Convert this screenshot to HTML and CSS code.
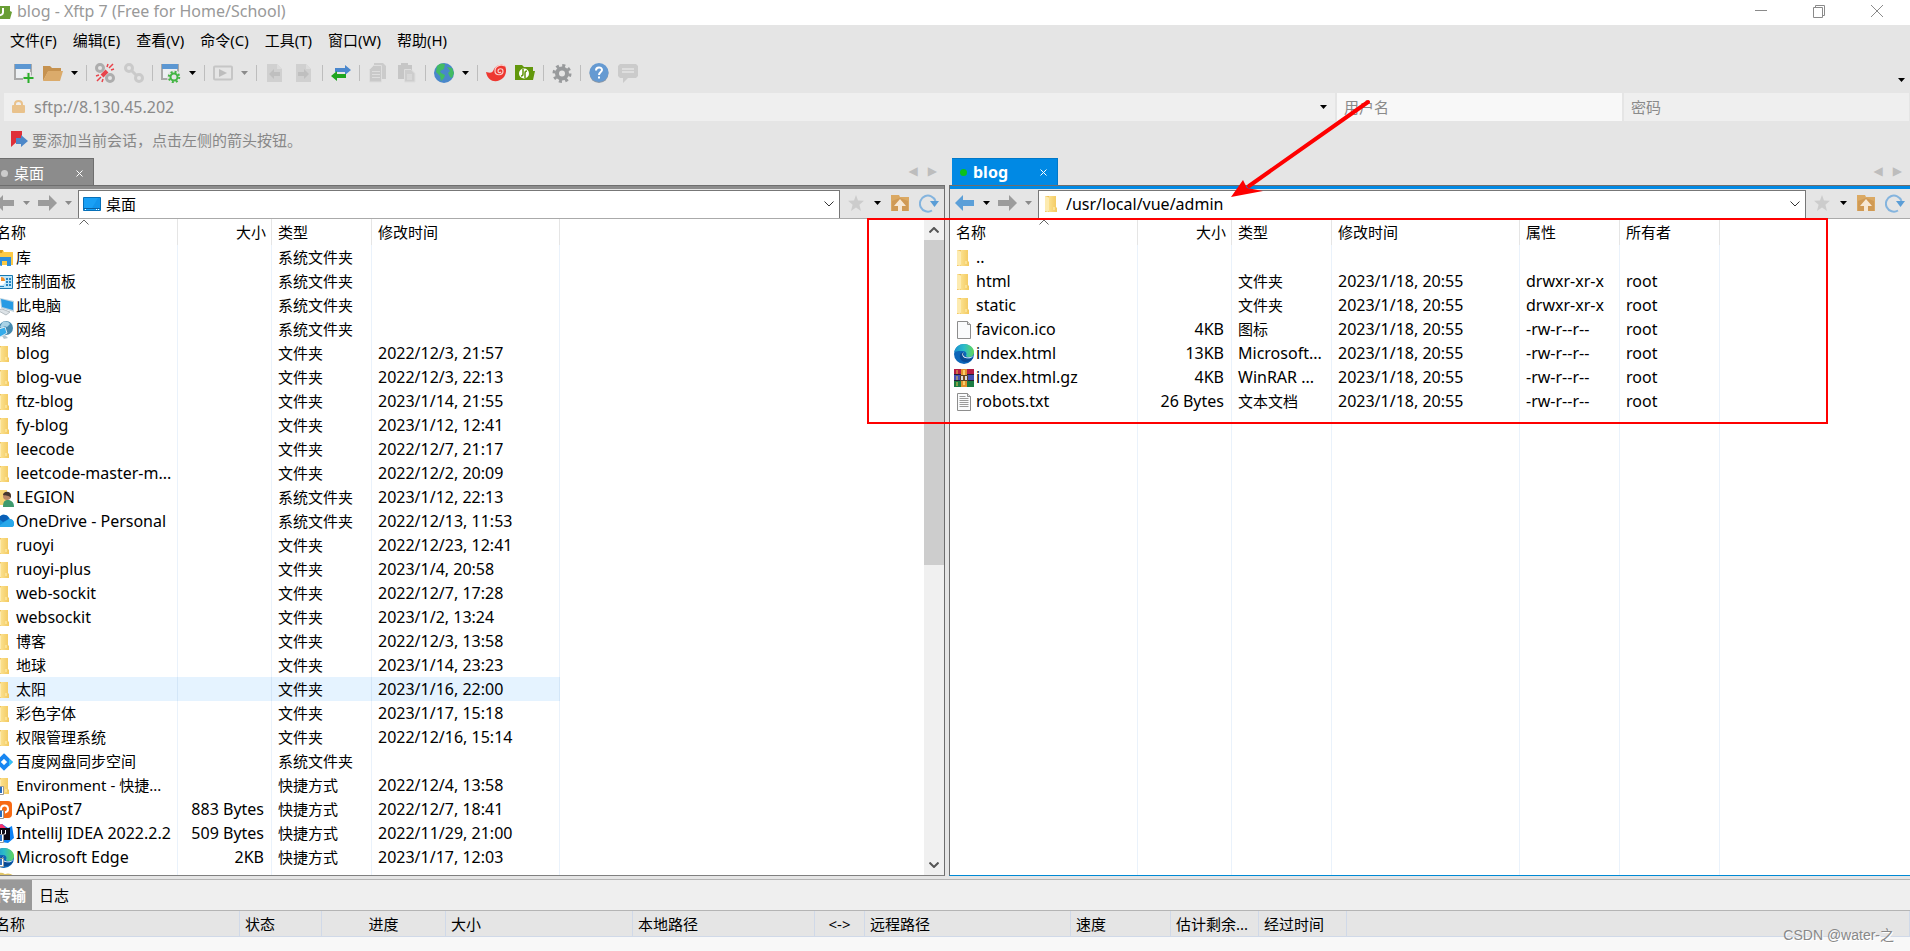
FILE: index.html
```html
<!DOCTYPE html>
<html lang="zh-CN">
<head>
<meta charset="utf-8">
<title>blog - Xftp 7</title>
<link rel="stylesheet" href="styles.css">
</head>
<body>
<svg class="defs" aria-hidden="true">
  <defs>
    <linearGradient id="g-folder" x1="0" x2="1"><stop offset="0" stop-color="#fbe08c"/><stop offset="1" stop-color="#f3c95f"/></linearGradient>
    <linearGradient id="g-edge" x1="0" x2="1"><stop offset="0" stop-color="#1b8fd0"/><stop offset=".5" stop-color="#2bbcc9"/><stop offset="1" stop-color="#62d65a"/></linearGradient>
    <symbol id="caret" viewBox="0 0 7 4"><path d="M0 0h7L3.500 4z" fill="currentColor"/></symbol>
    <symbol id="chevron" viewBox="0 0 10 6"><path d="M.5.5 5 5 9.500.5" fill="none" stroke="currentColor"/></symbol>
    <symbol id="folder" viewBox="0 0 20 20"><path d="M3 2h8v16H3z" fill="#f0c35c"/><path d="M7 2h7v11l1 1v4H7z" fill="url(#g-folder)"/><path d="M3 2l4 1.500v13L6 18 3 17z" fill="#fdebb0"/><path d="M12 13v3" stroke="#fff0b8"/></symbol>
    <symbol id="file" viewBox="0 0 20 20"><path d="M3.500 1.500h10l3 3v14h-13z" fill="#fafbfc" stroke="#8d8d8d"/><path d="M13.500 1.500v3h3" fill="#ddd" stroke="#8d8d8d"/></symbol>
    <symbol id="text" viewBox="0 0 20 20"><path d="M3.500 1.500h10l3 3v14h-13z" fill="#fafbfc" stroke="#8d8d8d"/><path d="M5.500 4.500h6M5.500 6.500h9M5.500 8.500h9M5.500 10.500h9M5.500 12.500h9M5.500 14.500h9" stroke="#9a9a9a"/><path d="M13.500 1.500v3h3" fill="#ddd" stroke="#8d8d8d"/></symbol>
    <symbol id="edge" viewBox="0 0 20 20"><circle cx="10" cy="10" r="10" fill="#0d66b8"/><path d="M0 9C1 3 5 0 10 0c6 0 10 4 10 8 0 3-2 5-5 5-2 0-3-.5-3-1.500 1-1 .6-4.500-3-4.500C5 7 1 7 0 9z" fill="url(#g-edge)"/><path d="M7 9c-2 2-2 8 4 9 3 .4 6-1 8-4-5 2-10 0-9-4 .3-1.500-2-2-3-1z" fill="#0b4a94"/><path d="M10 8c-2 2-1 5 3 5.500 2 .2 4-.3 6-1.500-1 1.500-3 2.500-6 2.300C8 14 7 9.500 10 8z" fill="#fff"/></symbol>
    <symbol id="rar" viewBox="0 0 20 20"><path d="M0 1h20v6H0z" fill="#b51e45"/><path d="M0 7h20v6H0z" fill="#4650b4"/><path d="M0 13h20v6H0z" fill="#1c7c42"/><path d="M0 6.500h20M0 12.500h20" stroke="#24203a"/><path d="M7 1h6v18H7z" fill="#e3922c"/><path d="M9 2h2v15H9z" fill="#f9cf6b"/><path d="M6.500 7.500h7v5h-7z" fill="#ddd" stroke="#594226"/><path d="M9 8h2v4H9z" fill="#7b5021"/><path d="M3 2v4M3 8v4M3 14v4" stroke="#e9c54a"/></symbol>
    <symbol id="library" viewBox="0 0 20 20"><path d="M2 2h7l1 2h9v13H2z" fill="#fdca45"/><path d="M2 2h7l-1 3H2z" fill="#d89a1c"/><path d="M4 17V9h13v9h-4v-5H8v5z" fill="#2d8edc"/></symbol>
    <symbol id="panel" viewBox="0 0 20 20"><path d="M.5 3.500h18v13H.5z" fill="#bde6fa" stroke="#1979b0"/><circle cx="7" cy="9" r="4" fill="#fff"/><path d="M7 9V5a4 4 0 0 1 4 4z" fill="#f08f2b"/><path d="M12 6h2v2h-2zM15 6h2v2h-2zM12 9h2v2h-2zM15 9h2v2h-2zM12 12h2v2h-2zM15 12h2v2h-2z" fill="#2685c2"/><path d="M3 14.500h7" stroke="#2685c2"/></symbol>
    <symbol id="computer" viewBox="0 0 20 20"><path d="M6 2l14 3v11L7 12z" fill="#bcd2df"/><path d="M7 3l12 3v8L8 11z" fill="#279be4"/><path d="M3 14l5-1 8 3-4 3z" fill="#dde3e7" stroke="#b5bdc2"/></symbol>
    <symbol id="network" viewBox="0 0 20 20"><circle cx="12" cy="8" r="7" fill="#4689ae"/><path d="M8 3c2-2 6-2 8 1l-3 3-3-1-1 3-3-2z" fill="#a9d2e6"/><path d="M2 10l9-3 2 6-7 4z" fill="#35aceb" stroke="#d7e8f1"/><path d="M8 16l3-1 3 3-4 1z" fill="#b4c5cf"/></symbol>
    <symbol id="user" viewBox="0 0 20 20"><path d="M2 2h11v15H2z" fill="#f7d575"/><path d="M9 19c0-6 2-7 5-7s6 2 6 7z" fill="#3e9a6d"/><circle cx="13" cy="8" r="4" fill="#b98768"/><path d="M9 7c0-4 8-5 8 1v2c-2-3-5-2-8-3z" fill="#453630"/></symbol>
    <symbol id="onedrive" viewBox="0 0 20 20"><path d="M1 12C0 7 5 7 5 6c2-5 9-4 11 1 3 0 4 3 4 5s-1 3-3 3H3z" fill="#1490df"/><path d="M5 6c2-5 9-4 10 1l-6 3-4-3z" fill="#0a5fb6"/><path d="M3 15l12-8c4 0 5 3 5 5s-1 3-3 3z" fill="#28a8ea"/></symbol>
    <symbol id="baidu" viewBox="0 0 20 20"><path d="M10 4l6 6-6 6-6-6z" fill="none" stroke="#1887f2" stroke-width="4"/><path d="M15 7l4 3-4 4z" fill="#35c2f4"/></symbol>
    <symbol id="link" viewBox="0 0 20 20"><path d="M.5 10.500h9v8h-9z" fill="#fff" stroke="#999"/><path d="M7 17v-5H5M7 12l-4 4" fill="none" stroke="#286fc3" stroke-width="2"/></symbol>
    <symbol id="apipost" viewBox="0 0 20 20"><rect x="0" y="1" width="18" height="17" rx="4" fill="#f76a14"/><path d="M7 14v-5a3.500 3.500 0 1 1 4 3.500" fill="none" stroke="#fff" stroke-width="2"/></symbol>
    <symbol id="idea" viewBox="0 0 20 20"><path d="M0 2l8-2 6 4 4-2 2 12-6 5-14-2z" fill="#0d82f5"/><path d="M0 2l8-2 5 5-9 8z" fill="#fb316b"/><path d="M3 4h13v12H3z" fill="#0c0914"/><path d="M7.500 6v4M11.500 6v4H10" stroke="#fff" fill="none"/></symbol>
    <symbol id="desktop" viewBox="0 0 20 20"><path d="M1.500 3.500h17v13h-17z" fill="#19a0f5" stroke="#0770b8"/><path d="M2 14.500h16" stroke="#0a61a2"/><path d="M3 15.500h1M14 15.500h1M16 15.500h1" stroke="#fff"/><path d="M10 14l6-10h2v10z" fill="#1295ec"/></symbol>
    <symbol id="back" viewBox="0 0 20 16"><path d="M0 8l8-8v5h11v6H8v5z" fill="currentColor"/></symbol>
    <symbol id="forward" viewBox="0 0 20 16"><path d="M20 8l-8-8v5H1v6h11v5z" fill="currentColor"/></symbol>
    <symbol id="star" viewBox="0 0 16 16"><path d="M8 0l2 5.500 6 .3-4.600 3.900L13 16l-5-3.500L3 16l1.600-6.300L0 5.800l6-.3z" fill="#ccc"/></symbol>
    <symbol id="up" viewBox="0 0 18 18"><path d="M0 1h8l1 2h9v14H0z" fill="#dba963"/><path d="M1 17V7l8-3 8 3v10z" fill="#d09a55"/><path d="M9 5l6 7h-4v5H7v-5H3z" fill="#f7e8d4"/></symbol>
    <symbol id="refresh" viewBox="0 0 20 20"><path d="M13 17.500A8 8 0 1 1 16.500 8" fill="none" stroke="#84b4de" stroke-width="2"/><path d="M11 8h9l-4.500 6z" fill="#5a9dd6"/></symbol>
    <symbol id="chain" viewBox="0 0 20 20"><g fill="none" stroke="currentColor" stroke-width="3"><circle cx="5" cy="5" r="3.500"/><circle cx="15" cy="15" r="3.500"/><path d="M7 7l6 6"/></g></symbol>
    <symbol id="window" viewBox="0 0 20 20"><path d="M1 2h16v14H1z" fill="#edf0f3" stroke="#a9a9a9" stroke-width="2"/><path d="M1 1h16v5H1z" fill="#5c97d2"/></symbol>
  </defs>
</svg>

<div class="window">
  <header class="titlebar">
    <svg class="app-icon" viewBox="0 0 22 18"><path d="M0 2h8l2 2h10v5l2 1-2 7H0z" fill="#699e35"/><path d="M13 6v4a3 3 0 0 1-4 3" fill="none" stroke="#fff" stroke-width="2"/></svg>
    <h1 class="title">blog - Xftp 7 (Free for Home/School)</h1>
    <div class="window-controls">
      <button aria-label="最小化"><svg viewBox="0 0 14 14"><path d="M1 6.500h12"/></svg></button>
      <button aria-label="还原"><svg viewBox="0 0 14 14"><path d="M1.500 3.500h9v10h-9zM3.500 3.500v-2h9v10h-2"/></svg></button>
      <button aria-label="关闭"><svg viewBox="0 0 14 14"><path d="M1 1l12 12M13 1L1 13"/></svg></button>
    </div>
  </header>

  <nav class="menubar">
    <button>文件(F)</button><button>编辑(E)</button><button>查看(V)</button><button>命令(C)</button><button>工具(T)</button><button>窗口(W)</button><button>帮助(H)</button>
  </nav>

  <div class="toolbar">
    <button aria-label="新建会话"><svg viewBox="0 0 20 20"><use href="#window"/><path d="M9 15h11M14.500 9v11" stroke="#e5e5e5" stroke-width="5"/><path d="M9.500 15h10M14.500 10v10" stroke="#2bae2b" stroke-width="2"/></svg></button>
    <button aria-label="打开"><svg viewBox="0 0 20 20"><path d="M0 3h7l2 2h9v4H5L0 18z" fill="#c6924f"/><path d="M5 8h15l-3 10H0z" fill="#dbab6b"/></svg></button>
    <button class="drop" aria-label="打开选项"><svg><use href="#caret"/></svg></button>
    <span class="sep"></span>
    <button aria-label="断开"><svg class="c-mid" viewBox="0 0 20 20"><use href="#chain"/><path d="M7 13l6-6" stroke="#e5e5e5" stroke-width="5"/><path d="M7 13l5-5" stroke="#e8444b" stroke-width="4"/><path d="M14 5l4-4M6 14l-4 4M12 4l1-3M16 7l3-1M4 12l-3 1M8 16l-1 3" stroke="#e8444b" stroke-width="1.500"/></svg></button>
    <button aria-label="重新连接"><svg class="c-light" viewBox="0 0 20 20"><use href="#chain"/></svg></button>
    <span class="sep"></span>
    <button aria-label="属性"><svg viewBox="0 0 20 20"><use href="#window"/><circle cx="13" cy="14" r="7" fill="#e5e5e5"/><circle cx="13" cy="14" r="3.500" fill="none" stroke="#43b543" stroke-width="2"/><circle cx="13" cy="14" r="5.200" fill="none" stroke="#43b543" stroke-width="2" stroke-dasharray="2 2.080"/></svg></button>
    <button class="drop" aria-label="属性选项"><svg><use href="#caret"/></svg></button>
    <span class="sep"></span>
    <button aria-label="执行"><svg viewBox="0 0 20 20"><rect x="1" y="3.500" width="18" height="13" rx="1" fill="none" stroke="#c6c6c6" stroke-width="2"/><path d="M6 6l8 4-8 4z" fill="#bdbdbd"/></svg></button>
    <button class="drop muted" aria-label="执行选项"><svg><use href="#caret"/></svg></button>
    <span class="sep"></span>
    <button aria-label="下载"><svg viewBox="0 0 20 20"><path d="M2 1h10l5 5v13H2z" fill="#d0d0d0"/><path d="M12 1v5h5z" fill="#dcdcdc"/><path d="M4 11l5-5v3h6v4H9v3z" fill="#bfbfbf"/></svg></button>
    <button aria-label="上传"><svg viewBox="0 0 20 20"><path d="M2 1h10l5 5v13H2z" fill="#d0d0d0"/><path d="M12 1v5h5z" fill="#dcdcdc"/><path d="M15 11l-5-5v3H4v4h6v3z" fill="#bfbfbf"/></svg></button>
    <span class="sep"></span>
    <button aria-label="同步"><svg viewBox="0 0 20 20"><path d="M20 7l-6-5v3H4v4h10v3z" fill="#4a87cd"/><path d="M0 13l6-5v3h9v4H6v3z" fill="#1fa51f"/></svg></button>
    <span class="sep"></span>
    <button aria-label="复制"><svg viewBox="0 0 20 20"><path d="M6 0h9l3 3v13H6z" fill="#cbcbcb"/><path d="M1.500 6.500l4-4h8V19h-12z" fill="#c9c9c9" stroke="#dedede"/><path d="M4 8.500h8M4 11.500h8M4 14.500h8" stroke="#dedede"/></svg></button>
    <button aria-label="粘贴"><svg viewBox="0 0 20 20"><path d="M1 2h3V0h7v2h4v14H1z" fill="#c6c6c6"/><path d="M7.500 6.500H14l4 4V19H7.500z" fill="#cdcdcd" stroke="#dedede"/><path d="M10 12h5M10 14h5M10 16h5" stroke="#e2e2e2"/></svg></button>
    <span class="sep"></span>
    <button aria-label="语言"><svg viewBox="0 0 20 20"><circle cx="10" cy="10" r="10" fill="#4987ca"/><path d="M3 3c3-3 5-3 8-2l-1 5-4 2 1 2 4 2-1 3-3 3-1-5-4-4zM13 4l5 1 2 5-2 5-2-1-2-4 2-2z" fill="#42bb63"/></svg></button>
    <button class="drop" aria-label="语言选项"><svg><use href="#caret"/></svg></button>
    <span class="sep"></span>
    <button aria-label="Xshell"><svg viewBox="0 0 20 20"><path d="M0 9c4 1 6 1 7-1 2-5 6-7 10-6l2 1c2 4 1 9-2 12C12 20 2 20 0 9z" fill="#ee3730"/><path d="M19 3c-5-2-10 0-10 5 0 5 8 5 8 0 0-3-5-3-5 0 0 2 2 2 3 1" fill="none" stroke="#f9cfcc" stroke-width="1.200"/></svg></button>
    <button aria-label="Xftp"><svg viewBox="0 0 20 20"><path d="M0 2h7l2 2h9v4h2l-2 9H0z" fill="#62970c"/><circle cx="9" cy="10.500" r="5" fill="#fff"/><path d="M8 6v5c0 2-1 2-2 2M10 15v-5c0-2 1-2 2-2" fill="none" stroke="#62970c" stroke-width="1.500"/></svg></button>
    <span class="sep"></span>
    <button aria-label="选项"><svg viewBox="0 0 20 20"><circle cx="10" cy="10.500" r="5" fill="none" stroke="#989a9c" stroke-width="4"/><circle cx="10" cy="10.500" r="8" fill="none" stroke="#989a9c" stroke-width="3" stroke-dasharray="3 3.283"/></svg></button>
    <span class="sep"></span>
    <button aria-label="帮助"><svg viewBox="0 0 20 20"><circle cx="10" cy="10.500" r="9.500" fill="#8c98a6"/><circle cx="10" cy="9.500" r="9.500" fill="#659ad2"/><path d="M7 7.500c0-4 6-4 6-.5 0 2-3 2-3 5M10 13.500v2" fill="none" stroke="#fff" stroke-width="2"/></svg></button>
    <button aria-label="反馈"><svg viewBox="0 0 20 20"><path d="M2 1h16l2 2v10l-2 2h-8l-5 5v-5H2l-2-2V3z" fill="#cbcbcb"/><path d="M4 6h12M4 9h12" stroke="#dedede" stroke-width="2"/></svg></button>
    <button class="drop overflow" aria-label="更多按钮"><svg><use href="#caret"/></svg></button>
  </div>

  <form class="address">
    <div class="field host">
      <svg class="lock" viewBox="0 0 13 14"><path d="M3 6V4c0-4 7-4 7 0v2" fill="none" stroke="#e9c28c" stroke-width="2"/><rect y="5" width="13" height="8" rx="1" fill="#e9c28c"/></svg>
      <input aria-label="主机" value="sftp://8.130.45.202">
      <button class="drop" type="button" aria-label="历史记录"><svg><use href="#caret"/></svg></button>
    </div>
    <input class="field username" aria-label="用户名" placeholder="用户名">
    <input class="field password" aria-label="密码" type="password" placeholder="密码">
  </form>

  <p class="hint"><svg viewBox="0 0 17 17"><path d="M0 0h11v6L0 16z" fill="#df3039"/><path d="M5 7h5V4l7 6-7 6v-3H5z" fill="#4d88c9"/></svg>要添加当前会话，点击左侧的箭头按钮。</p>

  <main class="workspace">
    <section class="pane local">
      <div class="tabs">
        <button class="tab"><i class="dot"></i><span>桌面</span><svg class="close" viewBox="0 0 7 7"><path d="M.5.5l6 6M6.500.5l-6 6"/></svg></button>
        <div class="tab-scroll"><button aria-label="上一个">◀</button><button aria-label="下一个">▶</button></div>
      </div>
      <div class="nav">
        <div class="history">
          <button aria-label="后退"><svg class="arrow"><use href="#back"/></svg></button><button class="drop muted" aria-label="后退列表"><svg><use href="#caret"/></svg></button>
          <button aria-label="前进"><svg class="arrow"><use href="#forward"/></svg></button><button class="drop muted" aria-label="前进列表"><svg><use href="#caret"/></svg></button>
        </div>
        <div class="path"><svg class="icon"><use href="#desktop"/></svg><input class="cjk" aria-label="本地路径" value="桌面"><button aria-label="展开"><svg class="chev"><use href="#chevron"/></svg></button></div>
        <div class="tools">
          <button aria-label="收藏"><svg class="star"><use href="#star"/></svg></button><button class="drop" aria-label="收藏列表"><svg><use href="#caret"/></svg></button>
          <button aria-label="上级"><svg class="up"><use href="#up"/></svg></button><button aria-label="刷新"><svg class="refresh"><use href="#refresh"/></svg></button>
        </div>
      </div>
      <div class="body">
        <div class="list">
          <table class="files">
            <colgroup><col class="c-name"><col class="c-size"><col class="c-type"><col class="c-date"></colgroup>
            <thead><tr><th class="sorted">名称<svg class="sort"><use href="#chevron"/></svg></th><th class="size">大小</th><th>类型</th><th>修改时间</th></tr></thead>
            <tbody>
              <tr><td class="name cjk"><svg class="icon"><use href="#library"/></svg>库</td><td></td><td class="cjk">系统文件夹</td><td></td></tr>
              <tr><td class="name cjk"><svg class="icon"><use href="#panel"/></svg>控制面板</td><td></td><td class="cjk">系统文件夹</td><td></td></tr>
              <tr><td class="name cjk"><svg class="icon"><use href="#computer"/></svg>此电脑</td><td></td><td class="cjk">系统文件夹</td><td></td></tr>
              <tr><td class="name cjk"><svg class="icon"><use href="#network"/></svg>网络</td><td></td><td class="cjk">系统文件夹</td><td></td></tr>
              <tr><td class="name"><svg class="icon"><use href="#folder"/></svg>blog</td><td></td><td class="cjk">文件夹</td><td>2022/12/3, 21:57</td></tr>
              <tr><td class="name"><svg class="icon"><use href="#folder"/></svg>blog-vue</td><td></td><td class="cjk">文件夹</td><td>2022/12/3, 22:13</td></tr>
              <tr><td class="name"><svg class="icon"><use href="#folder"/></svg>ftz-blog</td><td></td><td class="cjk">文件夹</td><td>2023/1/14, 21:55</td></tr>
              <tr><td class="name"><svg class="icon"><use href="#folder"/></svg>fy-blog</td><td></td><td class="cjk">文件夹</td><td>2023/1/12, 12:41</td></tr>
              <tr><td class="name"><svg class="icon"><use href="#folder"/></svg>leecode</td><td></td><td class="cjk">文件夹</td><td>2022/12/7, 21:17</td></tr>
              <tr><td class="name"><svg class="icon"><use href="#folder"/></svg>leetcode-master-m...</td><td></td><td class="cjk">文件夹</td><td>2022/12/2, 20:09</td></tr>
              <tr><td class="name"><svg class="icon"><use href="#user"/></svg>LEGION</td><td></td><td class="cjk">系统文件夹</td><td>2023/1/12, 22:13</td></tr>
              <tr><td class="name"><svg class="icon"><use href="#onedrive"/></svg>OneDrive - Personal</td><td></td><td class="cjk">系统文件夹</td><td>2022/12/13, 11:53</td></tr>
              <tr><td class="name"><svg class="icon"><use href="#folder"/></svg>ruoyi</td><td></td><td class="cjk">文件夹</td><td>2022/12/23, 12:41</td></tr>
              <tr><td class="name"><svg class="icon"><use href="#folder"/></svg>ruoyi-plus</td><td></td><td class="cjk">文件夹</td><td>2023/1/4, 20:58</td></tr>
              <tr><td class="name"><svg class="icon"><use href="#folder"/></svg>web-sockit</td><td></td><td class="cjk">文件夹</td><td>2022/12/7, 17:28</td></tr>
              <tr><td class="name"><svg class="icon"><use href="#folder"/></svg>websockit</td><td></td><td class="cjk">文件夹</td><td>2023/1/2, 13:24</td></tr>
              <tr><td class="name cjk"><svg class="icon"><use href="#folder"/></svg>博客</td><td></td><td class="cjk">文件夹</td><td>2022/12/3, 13:58</td></tr>
              <tr><td class="name cjk"><svg class="icon"><use href="#folder"/></svg>地球</td><td></td><td class="cjk">文件夹</td><td>2023/1/14, 23:23</td></tr>
              <tr class="hover"><td class="name cjk"><svg class="icon"><use href="#folder"/></svg>太阳</td><td></td><td class="cjk">文件夹</td><td>2023/1/16, 22:00</td></tr>
              <tr><td class="name cjk"><svg class="icon"><use href="#folder"/></svg>彩色字体</td><td></td><td class="cjk">文件夹</td><td>2023/1/17, 15:18</td></tr>
              <tr><td class="name cjk"><svg class="icon"><use href="#folder"/></svg>权限管理系统</td><td></td><td class="cjk">文件夹</td><td>2022/12/16, 15:14</td></tr>
              <tr><td class="name cjk"><svg class="icon"><use href="#baidu"/></svg>百度网盘同步空间</td><td></td><td class="cjk">系统文件夹</td><td></td></tr>
              <tr><td class="name cjk"><svg class="icon"><use href="#folder"/><use href="#link"/></svg>Environment - 快捷...</td><td></td><td class="cjk">快捷方式</td><td>2022/12/4, 13:58</td></tr>
              <tr><td class="name"><svg class="icon"><use href="#apipost"/><use href="#link"/></svg>ApiPost7</td><td class="size">883 Bytes</td><td class="cjk">快捷方式</td><td>2022/12/7, 18:41</td></tr>
              <tr><td class="name"><svg class="icon"><use href="#idea"/><use href="#link"/></svg>IntelliJ IDEA 2022.2.2</td><td class="size">509 Bytes</td><td class="cjk">快捷方式</td><td>2022/11/29, 21:00</td></tr>
              <tr><td class="name"><svg class="icon"><use href="#edge"/><use href="#link"/></svg>Microsoft Edge</td><td class="size">2KB</td><td class="cjk">快捷方式</td><td>2023/1/17, 12:03</td></tr>
              <tr><td class="name"><svg class="icon" viewBox="0 0 20 20"><path d="M3 6c0-5 8-5 8 0M10 6c0-4 8-4 8 0" fill="none" stroke="#dfc365" stroke-width="3"/></svg></td><td></td><td></td><td></td></tr>
            </tbody>
          </table>
        </div>
        <div class="scrollbar"><button aria-label="向上"><svg class="chev flip"><use href="#chevron"/></svg></button><div class="track"><div class="thumb"></div></div><button aria-label="向下"><svg class="chev"><use href="#chevron"/></svg></button></div>
      </div>
    </section>

    <section class="pane remote">
      <div class="tabs">
        <button class="tab"><i class="dot"></i><span>blog</span><svg class="close" viewBox="0 0 7 7"><path d="M.5.5l6 6M6.500.5l-6 6"/></svg></button>
        <div class="tab-scroll"><button aria-label="上一个">◀</button><button aria-label="下一个">▶</button></div>
      </div>
      <div class="nav">
        <div class="history">
          <button aria-label="后退"><svg class="arrow active"><use href="#back"/></svg></button><button class="drop" aria-label="后退列表"><svg><use href="#caret"/></svg></button>
          <button aria-label="前进"><svg class="arrow"><use href="#forward"/></svg></button><button class="drop muted" aria-label="前进列表"><svg><use href="#caret"/></svg></button>
        </div>
        <div class="path"><svg class="icon"><use href="#folder"/></svg><input aria-label="远程路径" value="/usr/local/vue/admin"><button aria-label="展开"><svg class="chev"><use href="#chevron"/></svg></button></div>
        <div class="tools">
          <button aria-label="收藏"><svg class="star"><use href="#star"/></svg></button><button class="drop" aria-label="收藏列表"><svg><use href="#caret"/></svg></button>
          <button aria-label="上级"><svg class="up"><use href="#up"/></svg></button><button aria-label="刷新"><svg class="refresh"><use href="#refresh"/></svg></button>
        </div>
      </div>
      <div class="body">
        <div class="list">
          <table class="files">
            <colgroup><col class="c-name"><col class="c-size"><col class="c-type"><col class="c-date"><col class="c-type"><col class="c-type"></colgroup>
            <thead><tr><th class="sorted">名称<svg class="sort"><use href="#chevron"/></svg></th><th class="size">大小</th><th>类型</th><th>修改时间</th><th>属性</th><th>所有者</th></tr></thead>
            <tbody>
              <tr><td class="name"><svg class="icon"><use href="#folder"/></svg>..</td><td></td><td></td><td></td><td></td><td></td></tr>
              <tr><td class="name"><svg class="icon"><use href="#folder"/></svg>html</td><td></td><td class="cjk">文件夹</td><td>2023/1/18, 20:55</td><td>drwxr-xr-x</td><td>root</td></tr>
              <tr><td class="name"><svg class="icon"><use href="#folder"/></svg>static</td><td></td><td class="cjk">文件夹</td><td>2023/1/18, 20:55</td><td>drwxr-xr-x</td><td>root</td></tr>
              <tr><td class="name"><svg class="icon"><use href="#file"/></svg>favicon.ico</td><td class="size">4KB</td><td class="cjk">图标</td><td>2023/1/18, 20:55</td><td>-rw-r--r--</td><td>root</td></tr>
              <tr><td class="name"><svg class="icon"><use href="#edge"/></svg>index.html</td><td class="size">13KB</td><td>Microsoft...</td><td>2023/1/18, 20:55</td><td>-rw-r--r--</td><td>root</td></tr>
              <tr><td class="name"><svg class="icon"><use href="#rar"/></svg>index.html.gz</td><td class="size">4KB</td><td>WinRAR ...</td><td>2023/1/18, 20:55</td><td>-rw-r--r--</td><td>root</td></tr>
              <tr><td class="name"><svg class="icon"><use href="#text"/></svg>robots.txt</td><td class="size">26 Bytes</td><td class="cjk">文本文档</td><td>2023/1/18, 20:55</td><td>-rw-r--r--</td><td>root</td></tr>
              <tr class="filler"><td></td><td></td><td></td><td></td><td></td><td></td></tr>
            </tbody>
          </table>
        </div>
      </div>
    </section>
  </main>

  <section class="transfer">
    <div class="transfer-tabs"><button class="current">传输</button><button>日志</button></div>
    <table class="queue">
      <colgroup><col class="q-name"><col class="q-state"><col class="q-progress"><col class="q-size"><col class="q-local"><col class="q-dir"><col class="q-remote"><col class="q-speed"><col class="q-time"><col class="q-time"><col></colgroup>
      <thead><tr><th>名称</th><th>状态</th><th class="mid">进度</th><th>大小</th><th>本地路径</th><th class="mid">&lt;-&gt;</th><th>远程路径</th><th>速度</th><th>估计剩余...</th><th>经过时间</th><th></th></tr></thead>
    </table>
  </section>
</div>

<svg class="annotation" viewBox="0 0 1910 440" aria-hidden="true">
  <rect x="868" y="219" width="959" height="204" fill="none" stroke="#fe0000" stroke-width="2"/>
  <path d="M1368 102L1249 186" stroke="#fe0000" stroke-width="4" stroke-linecap="round"/>
  <path d="M1231 197l12-17 4 8 16 3z" fill="#fe0000"/>
</svg>
<span class="watermark">CSDN @water-之</span>
</body>
</html>
```
FILE: styles.css
```css
* { box-sizing: border-box; }
html, body { height: 100%; }
body {
  margin: 0;
  overflow: hidden;
  background: #e5e5e5;
  color: #000;
  font: 15px/24px "Noto Sans", "Noto Sans CJK SC", sans-serif;
}
button, input { font: inherit; color: inherit; border: 0; padding: 0; margin: 0; background: none; border-radius: 0; min-width: 0; }
svg { display: block; }
.defs { position: absolute; width: 0; height: 0; }

/* The window hangs slightly over the left screen edge. */
.window { display: flex; flex-direction: column; height: 100vh; margin-left: -10px; }

.titlebar { display: flex; align-items: center; height: 25px; padding-bottom: 4px; background: #fff; color: #999; }
.app-icon { width: 22px; height: 18px; }
.title { margin: 0 auto 0 5px; font-size: 16px; font-weight: 400; line-height: 20px; }
.window-controls { display: flex; gap: 44px; padding-right: 26px; }
.window-controls svg { width: 14px; height: 14px; fill: none; stroke: #8a8a8a; }

.menubar { display: flex; gap: 16px; padding: 3px 20px 6px; }

.toolbar { display: flex; align-items: center; height: 35px; padding: 0 0 5px 24px; }
.toolbar > button { margin-right: 9px; }
.toolbar > button svg { width: 20px; height: 20px; }
.toolbar > .drop { width: 15px; margin-left: -9px; padding-left: 8px; }
.toolbar > .overflow { align-self: flex-end; margin: 0 5px 0 auto; padding: 0 0 6px; width: 7px; line-height: 4px; }
.drop svg, .toolbar > .drop svg { width: 7px; height: 4px; }
.muted { color: #8a8a8a; }
.sep { width: 1px; height: 16px; margin: 0 8px 0 -1px; background: #bdbdbd; }
.c-mid { color: #adadad; }
.c-light { color: #cacaca; }

.address { display: flex; gap: 2px; padding: 0 1px 0 14px; color: #8a8a8a; }
.field { height: 28px; background: #efefef; }
.host { display: flex; align-items: center; flex: 1; padding: 0 8px; font-size: 16px; }
.host input { flex: 1; margin-left: 9px; }
.host .drop { color: #000; }
.lock { width: 13px; height: 14px; }
.username, .password { width: 285px; padding: 0 7px; }
.username { background: #f8f8f8; }
.field::placeholder { color: #8a8a8a; }

.hint { display: flex; align-items: center; gap: 4px; height: 37px; margin: 0; padding: 0 21px; color: #888; }
.hint svg { width: 17px; height: 17px; }

.workspace { display: flex; flex: 1; gap: 4px; min-height: 0; }
.pane { display: flex; flex-direction: column; min-width: 0; }
.local { flex: 955 1 0; }
.remote { flex: 961 1 0; }
.tabs { display: flex; justify-content: space-between; height: 27px; }
.tab { display: flex; align-items: center; width: 104px; padding: 2px 10px 0 11px; color: #fff; background: #8c8c8c; border: solid #6e6e6e; border-width: 1px 1px 0 0; }
.dot { width: 7px; height: 7px; margin-right: 6px; border-radius: 50%; background: #ccc; }
.close { width: 7px; height: 7px; margin-left: auto; stroke: #fff; }
.tab-scroll { display: flex; gap: 10px; padding-right: 8px; color: #bdbdbd; font: 12px/27px "DejaVu Sans", sans-serif; }
.remote .tabs { padding-left: 3px; }
.remote .tab { width: 106px; padding: 0 10px 0 8px; background: #0089e4; border-color: #0078c8; font-size: 16px; font-weight: 700; }
.remote .dot { background: #0cc01c; }

.nav { display: flex; height: 34px; border-top: 1px solid #6e6e6e; border-bottom: 1px solid #aaa; box-shadow: inset 0 3px #8c8c8c; }
.remote .nav { box-shadow: inset 0 3px #0089e4; }
.local .nav { border-right: 1px solid #6e6e6e; }
.remote .nav, .remote .body { border-left: 1px solid #6e6e6e; }
.history { display: flex; align-items: center; width: 88px; padding: 0 6px 0 5px; justify-content: space-between; margin-top: 2px; }
.arrow { width: 20px; height: 16px; color: #9c9c9c; }
.active { color: #5b9fd8; }
.path { display: flex; align-items: center; flex: 1; min-width: 0; margin-top: 4px; padding: 0 5px 1px 3px; background: #fff; border: solid #777; border-width: 1px 1px 0; font-size: 16px; }
.path input { flex: 1; margin-left: 4px; }
.icon { width: 20px; height: 20px; flex: none; }
.chev { width: 10px; height: 6px; color: #333; }
.tools { display: flex; align-items: center; justify-content: space-between; width: 104px; padding: 0 5px 0 8px; margin-top: 2px; }
.star { width: 16px; height: 16px; }
.up { width: 18px; height: 18px; }
.refresh { width: 20px; height: 20px; }

.body { display: flex; flex: 1; min-height: 0; background: #fff; border-bottom: 1px solid #808080; }
.local .body { border-right: 1px solid #6e6e6e; }
.remote .body { border-bottom-color: #0089d4; }
.list { flex: 1; min-width: 0; overflow: hidden; }
.files { height: 100%; table-layout: fixed; border-spacing: 0; font-size: 16px; }
.files th, .files td { height: 24px; padding: 0 0 0 6px; border-right: 1px solid #eaf2fb; text-align: left; font-weight: 400; white-space: nowrap; overflow: hidden; }
.files th { height: 26px; border-right-color: #e5e5e5; font-size: 15px; }
.files .size { text-align: right; padding-right: 7px; }
.files th.size { padding-right: 5px; }
.files .name { padding-left: 4px; }
.files .name .icon { display: inline-block; vertical-align: -5px; margin-right: 2px; }
.files td.cjk, .path .cjk { font-size: 15px; }
.files .hover td { background: #e5f3ff; border-right-color: #d3e6f8; }
.files .filler td { height: auto; }
.sorted { position: relative; }
.sort { position: absolute; top: 0; left: 89px; width: 10px; height: 6px; transform: rotate(180deg); color: #666; }
.c-name, .c-date { width: 188px; }
.c-size { width: 94px; }
.c-type { width: 100px; }

.scrollbar { display: flex; flex-direction: column; width: 20px; background: #f0f0f0; }
.scrollbar button { height: 21px; padding: 0 5px; }
.scrollbar .chev { stroke-width: 2px; color: #555; }
.flip { transform: rotate(180deg); }
.track { flex: 1; }
.thumb { height: 53%; background: #cdcdcd; }

.transfer { margin-top: 3px; height: 72px; background: #f8f8f8; border-top: 1px solid #b4b4b4; }
.transfer-tabs { display: flex; height: 31px; background: #efefef; border-bottom: 1px solid #b4b4b4; }
.transfer-tabs button { padding: 0 7px; }
.transfer-tabs .current { width: 42px; padding: 0 6px; background: #999; color: #fff; font-weight: 700; }
.queue { width: 100%; table-layout: fixed; border-spacing: 0; background: #e5e5e5; }
.queue th { height: 26px; padding: 0 0 0 5px; border: solid #d0d9e8; border-width: 0 1px 1px 0; font-weight: 400; text-align: left; white-space: nowrap; }
.queue .mid { text-align: center; padding: 0; }
.q-name { width: 250px; }
.q-state { width: 82px; }
.q-progress { width: 124px; }
.q-size { width: 187px; }
.q-local { width: 182px; }
.q-dir { width: 50px; }
.q-remote { width: 206px; }
.q-speed { width: 100px; }
.q-time { width: 88px; }

.annotation { position: absolute; top: 0; left: 0; width: 1910px; height: 440px; pointer-events: none; }
.watermark { position: absolute; right: 16px; bottom: 4px; color: #888; font: 14px/24px "Liberation Sans", "Noto Sans CJK SC", sans-serif; text-shadow: 1px 1px #fff; }
```
